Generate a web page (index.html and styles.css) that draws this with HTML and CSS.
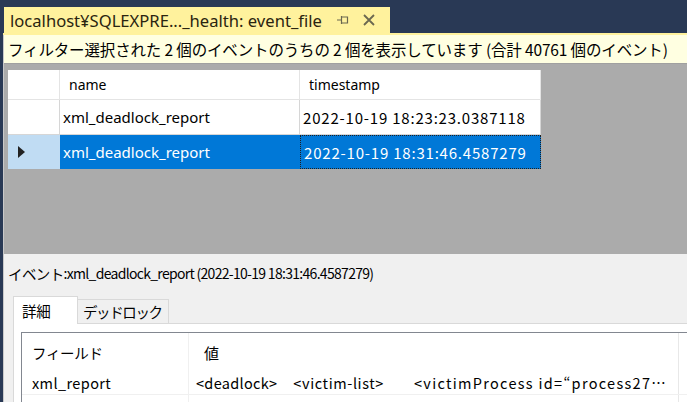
FILE: index.html
```html
<!DOCTYPE html>
<html lang="ja">
<head>
<meta charset="utf-8">
<link rel="stylesheet" href="styles.css">
</head>
<body>
<div class="window">
  <div class="tabstrip">
    <div class="doctab">
      <span class="doctab-title">localhost¥SQLEXPRE..._health: event_file</span>
      <svg class="pin" width="12" height="10" viewBox="0 0 12 10"><path d="M0 5h4M4.5 1v8M4.5 2h6v6h-6" fill="none" stroke="#6b6850" stroke-width="1.2"/></svg>
      <svg class="close" width="12" height="12" viewBox="0 0 12 12"><path d="M1 1L11 11M11 1L1 11" stroke="#6b6850" stroke-width="1.8"/></svg>
    </div>
  </div>
  <div class="tabline"></div>
  <div class="doc">
    <div class="infobar">フィルター選択された&nbsp;2&nbsp;個のイベントのうちの&nbsp;2&nbsp;個を表示しています (合計&nbsp;40761&nbsp;個のイベント)</div>
    <div class="gridarea">
      <div class="grid">
        <div class="row head">
          <div class="rh"></div>
          <div class="cell c1">name</div>
          <div class="cell c2">timestamp</div>
        </div>
        <div class="row r1">
          <div class="rh"></div>
          <div class="cell c1">xml_deadlock_report</div>
          <div class="cell c2 ts">2022-10-19 18:23:23.0387118</div>
        </div>
        <div class="row r2 sel">
          <div class="rh"><svg width="7" height="12" viewBox="0 0 7 12"><path d="M0 0L7 6L0 12Z" fill="#222"/></svg></div>
          <div class="cell c1">xml_deadlock_report</div>
          <div class="cell c2 ts focus">2022-10-19 18:31:46.4587279</div>
        </div>
      </div>
    </div>
    <div class="details">
      <div class="evlabel">イベント<span class="narrow">:xml_deadlock_report (2022-10-19 18:31:46.4587279)</span></div>
      <div class="ptabs">
        <div class="ptab active">詳細</div>
        <div class="ptab dl">デッドロック</div>
      </div>
      <div class="panel">
        <div class="list">
          <div class="lrow lhead">
            <div class="lc f">フィールド</div>
            <div class="lc v">値</div>
            <div class="lc x"></div>
          </div>
          <div class="lrow">
            <div class="lc f rep">xml_report</div>
            <div class="lc v"><span class="xv">&lt;deadlock&gt;</span><span class="xv g1">&lt;victim-list&gt;</span><span class="xv g2">&lt;victimProcess id=“process27…</span></div>
            <div class="lc x"></div>
          </div>
          <div class="lrow empty">
            <div class="lc f"></div>
            <div class="lc v"></div>
            <div class="lc x"></div>
          </div>
        </div>
      </div>
    </div>
  </div>
</div>
</body>
</html>
```

FILE: styles.css
```css
html, body {
  margin: 0;
  padding: 0;
}
body {
  width: 687px;
  height: 402px;
  overflow: hidden;
  background: #293955;
  font-family: "Noto Sans CJK JP", "Noto Sans", sans-serif;
  color: #000;
}
.window {
  display: flex;
  flex-direction: column;
  height: 402px;
}
.tabstrip {
  display: flex;
  padding: 7px 0 0 4px;
  height: 26px;
  flex-shrink: 0;
}
.doctab {
  background: #fff29d;
  display: flex;
  align-items: center;
  width: 386px;
  box-sizing: border-box;
  padding: 0 0 0 6px;
  height: 26px;
}
.doctab-title {
  font-family: "Noto Sans", sans-serif;
  font-size: 16.6px;
  color: #2a2410;
  white-space: nowrap;
}
.pin {
  margin-left: 15px;
}
.close {
  margin-left: 14px;
}
.tabline {
  height: 2px;
  background: #fff29d;
  margin-left: 3px;
  flex-shrink: 0;
}
.doc {
  flex: 1;
  margin-left: 3px;
  display: flex;
  flex-direction: column;
  background: #f0f0f0;
  border-left: 1px solid #c9c9c9;
  min-height: 0;
  overflow: hidden;
}
.infobar {
  height: 28px;
  flex-shrink: 0;
  background: #ffffe1;
  display: flex;
  align-items: center;
  padding-left: 4px;
  font-size: 15.5px;
  letter-spacing: -0.15px;
  white-space: nowrap;
  border-bottom: 1px solid #a0a0a0;
}
.gridarea {
  background: #ababab;
  height: 190px;
  flex-shrink: 0;
  padding: 6px 0 0 4px;
  box-sizing: border-box;
}
.grid {
  width: 533px;
}
.row {
  display: flex;
  background: #fff;
}
.rh {
  width: 52px;
  border-right: 1px solid #d6d6d6;
  border-bottom: 1px solid #d6d6d6;
  display: flex;
  align-items: center;
  padding-left: 10px;
  box-sizing: border-box;
}
.cell {
  box-sizing: border-box;
  display: flex;
  align-items: center;
  white-space: nowrap;
  border-right: 1px solid #d6d6d6;
  border-bottom: 1px solid #d6d6d6;
}
.c1 {
  width: 240px;
}
.c2 {
  width: 241px;
}
.head {
  height: 30px;
  font-family: "Noto Sans", sans-serif;
  font-size: 14px;
}
.head .cell {
  padding-left: 9px;
  border-color: #e4e4e4;
}
.head .rh {
  border-color: #e4e4e4;
}
.r1 {
  height: 35px;
}
.r2 {
  height: 34px;
}
.r1 .cell, .r2 .cell {
  font-family: "Noto Sans", sans-serif;
  font-size: 15px;
  padding-left: 3px;
}
.r1 .cell.ts, .r2 .cell.ts {
  font-family: "Noto Sans CJK JP", sans-serif;
  font-size: 15px;
  letter-spacing: 0.8px;
  padding-left: 3px;
}
.sel .rh {
  background: #c0dcf3;
  border-color: #c0dcf3;
}
.sel .cell {
  background: #0078d7;
  color: #fff;
  border-color: #0078d7;
}
.sel .cell.focus {
  border: 1px dotted #e08020;
  outline: 1px dotted #202020;
  outline-offset: -1px;
}
.details {
  flex: 1;
  display: flex;
  flex-direction: column;
  min-height: 0;
}
.evlabel {
  height: 36px;
  flex-shrink: 0;
  display: flex;
  align-items: center;
  padding: 2px 0 0 4px;
  box-sizing: border-box;
  font-size: 14.5px;
  letter-spacing: -0.6px;
  white-space: nowrap;
}
.narrow {
  font-size: 14px;
  letter-spacing: -0.7px;
}
.ptabs {
  display: flex;
  flex-shrink: 0;
  align-items: flex-end;
  padding: 5px 0 0 9px;
  height: 33px;
  box-sizing: border-box;
}
.ptab {
  height: 24px;
  border: 1px solid #d9d9d9;
  border-bottom: none;
  padding: 0 6px;
  display: flex;
  align-items: center;
  font-size: 14.5px;
  letter-spacing: -0.3px;
  background: #f0f0f0;
  box-sizing: border-box;
}
.ptab.dl {
  letter-spacing: -1.4px;
  padding-left: 5px;
}
.ptab.active {
  height: 28px;
  background: #fff;
  width: 65px;
  padding-left: 8px;
  position: relative;
  z-index: 1;
  margin-bottom: -1px;
}
.ptab + .ptab {
  border-left: none;
}
.panel {
  flex: 1;
  display: flex;
  flex-direction: column;
  min-height: 0;
  background: #fff;
  border: 1px solid #d9d9d9;
  border-right: none;
  border-bottom: none;
  margin-left: 9px;
  padding: 8px 0 0 7px;
}
.list {
  flex: 1;
  border: 1px solid #828790;
  border-right: none;
  border-bottom: none;
  min-height: 0;
}
.lrow {
  display: flex;
  height: 24px;
  border-bottom: 1px solid #f0f0f0;
  font-size: 14.5px;
  letter-spacing: -0.3px;
}
.lhead {
  height: 37px;
  border-bottom: none;
  align-items: stretch;
}
.lc {
  display: flex;
  align-items: center;
  white-space: nowrap;
  overflow: hidden;
  box-sizing: border-box;
}
.lc.f {
  width: 167px;
  padding-left: 10px;
  border-right: 1px solid #f0f0f0;
}
.lc.f.rep {
  letter-spacing: 0.4px;
}
.lc.v {
  width: 490px;
  padding-left: 7px;
  border-right: 1px solid #e8e8e8;
}
.lhead .lc {
  padding-top: 2px;
}
.lhead .lc.v {
  font-size: 15px;
  padding-left: 15px;
}
.xv {
  letter-spacing: 0.3px;
}
.g1 {
  margin-left: 16px;
  letter-spacing: 0.6px;
}
.g2 {
  margin-left: 30px;
  letter-spacing: 1.3px;
}
.lc.x {
  flex: 1;
}
```
